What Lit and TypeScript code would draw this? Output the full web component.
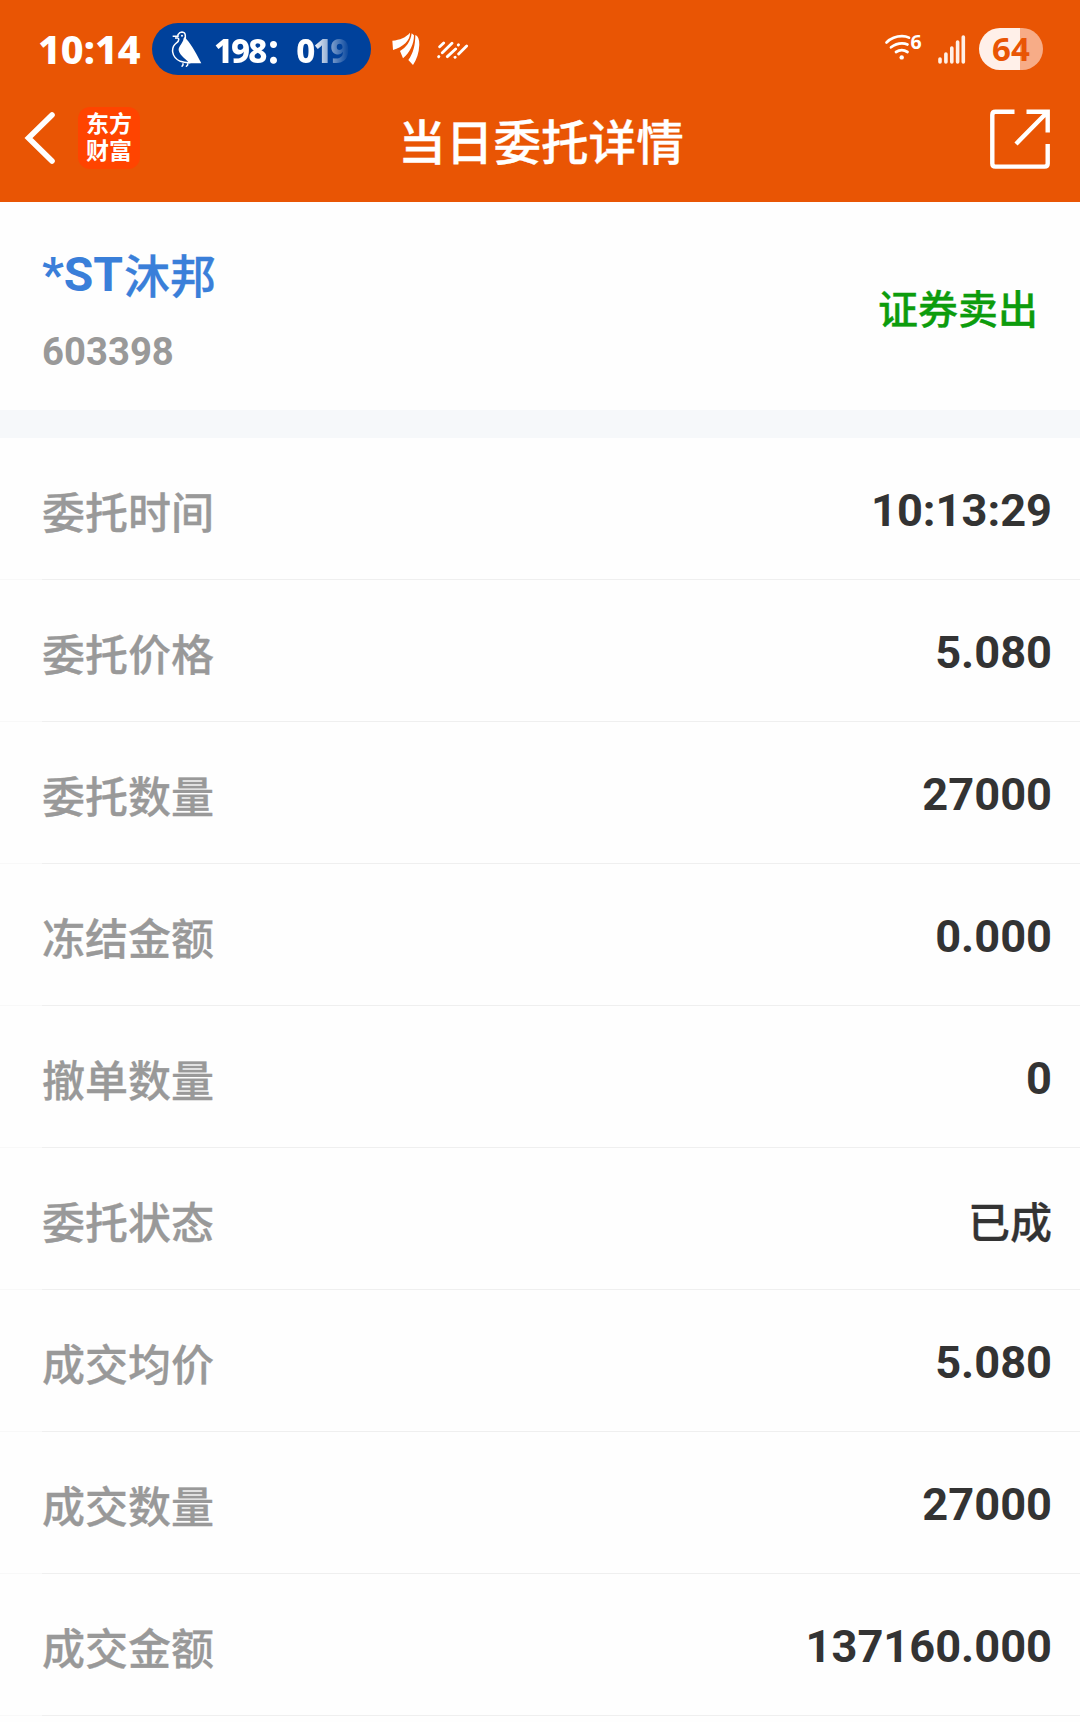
import { LitElement, html, css } from "lit";
import { customElement } from "lit/decorators.js";

const ROWS: [string, string][] = [
  ["委托时间", "10:13:29"],
  ["委托价格", "5.080"],
  ["委托数量", "27000"],
  ["冻结金额", "0.000"],
  ["撤单数量", "0"],
  ["委托状态", "已成"],
  ["成交均价", "5.080"],
  ["成交数量", "27000"],
  ["成交金额", "137160.000"],
];

@customElement("status-bar")
class StatusBar extends LitElement {
  static styles = css`
    :host { display: flex; align-items: center; height: 98px; padding: 0 37px 0 38px; box-sizing: border-box; color: #fff; font-family: "Noto Sans", "Noto Sans CJK SC", sans-serif; }
    .clock { width: 114px; font-size: 39.5px; font-weight: 800; line-height: 50px; white-space: nowrap; }
    .pill { display: flex; align-items: center; width: 219px; height: 52px; border-radius: 26px; background: #00419b; box-sizing: border-box; padding-left: 18.7px; }
    .bird { width: 31.3px; height: 36.7px; flex: none; }
    .ticker { margin-left: 12px; padding-top: 3px; width: 140px; white-space: nowrap; font-size: 33px; font-weight: 800; line-height: 46px; letter-spacing: -2px; -webkit-mask-image: linear-gradient(90deg, #000 70%, transparent 97%); mask-image: linear-gradient(90deg, #000 70%, transparent 97%); }
    .feather { width: 28px; height: 33.3px; margin-left: 20.7px; }
    .dashes { width: 31.3px; height: 18px; margin: 2px 0 0 17.6px; }
    .right { display: flex; align-items: center; margin-left: auto; }
    .wifi { width: 40px; height: 32px; overflow: visible; font: 700 19.5px "Noto Sans", sans-serif; }
    .signal { width: 30px; height: 32px; margin-left: 13px; }
    .battery { margin-left: 12px; width: 64px; height: 42px; border-radius: 21px; background: linear-gradient(90deg, #fff0e9 0 41px, #f7ac87 41px); color: #e95504; font-size: 33px; font-weight: 700; line-height: 41px; text-align: center; }
  `;
  render() {
    return html`
      <span class="clock">10:14</span>
      <div class="pill">
        <svg class="bird" viewBox="62 32 94 110">
          <path d="M103 50C118 66 134 90 153 129L117 129C112 121 88 106 85 90C84 78 98 70 100 54Z" fill="#fff"/>
          <g fill="none" stroke="#fff" stroke-width="4.500"><path d="M67 48H82M74 53H84M83 50V43Q88 35 95 35Q105 36 105 46V55M84 53Q88 62 78 68Q65 78 67 95Q70 114 90 123Q104 128 120 127M98 129V134L94 139M112 129V134L107 139"/></g>
          <circle cx="95" cy="46" r="3" fill="#fff"/>
        </svg>
        <span class="ticker">198：019</span>
      </div>
      <svg class="feather" viewBox="20 22 84 100" fill="#fff"><path d="M21 48C44 46 62 38 74 24C76 46 52 68 23 76Z"/><path d="M79 26L86 32C86 58 74 84 53 101L44 79C62 70 76 50 79 26Z"/><path d="M90 31Q102 34 102 60C101 85 94 105 83 121L69 106C84 86 90 60 90 31Z"/></svg>
      <svg class="dashes" viewBox="157 48 94 54"><path d="M165 65L177 54M162 95L162.500 94.500M173 83L202 55M188 95L213 72M221 60L221.500 59.500M211 97L211.500 96.500M222 87L246 63" fill="none" stroke="#fff" stroke-width="8.500" stroke-linecap="round"/></svg>
      <div class="right">
        <svg class="wifi" viewBox="884 33 40 32">
          <path d="M886.500 42.500Q893 36.200 902 36.200Q906 36.200 909 37.600M891 47.300Q896 43.300 902 43.300Q905 43.300 907.500 44.500M896 52Q901.800 48.300 907.500 52" fill="none" stroke="#fff" stroke-width="2.700" stroke-linecap="round"/>
          <circle cx="901.700" cy="57.400" r="2.200" fill="#fff"/>
          <text x="910.500" y="49" fill="#fff">6</text>
        </svg>
        <svg class="signal" viewBox="937 33 30 32"><path d="M940 59V62M945.900 54V62M951.800 48V62M957.600 42V62M963.300 37V62" fill="none" stroke="#fff0e6" stroke-width="3.600" stroke-linecap="round"/></svg>
        <span class="battery">64</span>
      </div>`;
  }
}

@customElement("nav-bar")
class NavBar extends LitElement {
  static styles = css`
    :host { display: grid; grid-template-columns: 1fr auto 1fr; align-items: center; height: 80px; padding: 0 30px 0 24px; box-sizing: border-box; color: #fff; font-family: Roboto, "Noto Sans CJK SC", sans-serif; }
    .left { display: flex; align-items: center; }
    .back { width: 32px; height: 54px; }
    .logo { margin-left: 22px; width: 62px; height: 62px; border-radius: 12px; background: #ff4400; display: flex; flex-direction: column; align-items: center; justify-content: center; font-size: 23px; font-weight: 700; line-height: 27px; }
    .title { padding: 12px 0 0 8px; font-size: 47.6px; font-weight: 500; line-height: 68px; -webkit-text-stroke: 0.3px currentColor; }
    .share { width: 60px; height: 60px; justify-self: end; margin-top: 1px; }
  `;
  render() {
    return html`
      <div class="left">
        <svg class="back" viewBox="0 0 32 54"><path d="M28 4L4.500 27L28 50" fill="none" stroke="#fff" stroke-width="5.600" stroke-linecap="round"/></svg>
        <div class="logo"><span>东方</span><span>财富</span></div>
      </div>
      <span class="title">当日委托详情</span>
      <svg class="share" viewBox="0 0 60 60"><g fill="none" stroke="#fff" stroke-width="4.400"><path d="M24.500 2.800H5.500Q2.300 2.800 2.300 6V54.500Q2.300 57.600 5.500 57.600H54.500Q57.700 57.600 57.700 54.500V35"/><path d="M36.500 2.800H57.700V23.500M56 4.500L26 35"/></g></svg>`;
  }
}

@customElement("app-root")
class AppRoot extends LitElement {
  static styles = css`
    :host { display: block; height: 1722px; overflow: hidden; background: #fefefe; font-family: Roboto, "Noto Sans CJK SC", sans-serif; }
    .header { height: 202px; background: #e95504; }
    .stock { display: flex; justify-content: space-between; height: 208px; padding: 0 42px; box-sizing: border-box; }
    .name { display: flex; margin-top: 38px; font-size: 48px; font-weight: 700; line-height: 70px; color: #3a7fd9; }
    .han { padding: 2px 0 0 1px; font-size: 46px; font-weight: 500; -webkit-text-stroke: 0.3px currentColor; }
    .code { margin-top: 16px; font-size: 38.3px; font-weight: 700; line-height: 48px; color: #999; }
    .side { margin-top: 80px; font-size: 40px; font-weight: 500; line-height: 58px; color: #0d9c0d; -webkit-text-stroke: 0.3px currentColor; }
    .gap { height: 28px; background: #f6f8fa; }
    .row { display: flex; align-items: center; justify-content: space-between; height: 142px; padding: 0 28px 0 42px; box-sizing: border-box; background: linear-gradient(90deg, #f8f8f8 42px, #efefef 42px) bottom / 100% 1px no-repeat; }
    .label { padding-top: 9px; font-size: 43px; font-weight: 500; line-height: 60px; color: #999; -webkit-text-stroke: 0.3px currentColor; }
    .value { padding-top: 4px; font-size: 45.2px; font-weight: 700; line-height: 60px; color: #333; }
    .cjk { padding-top: 10px; font-size: 42px; font-weight: 500; -webkit-text-stroke: 0.3px currentColor; }
  `;
  render() {
    return html`
      <div class="header"><status-bar></status-bar><nav-bar></nav-bar></div>
      <section class="stock">
        <div><div class="name"><span>*ST</span><span class="han">沐邦</span></div><div class="code">603398</div></div>
        <div class="side">证券卖出</div>
      </section>
      <div class="gap"></div>
      ${ROWS.map(([k, v]) => html`<div class="row"><span class="label">${k}</span><span class="value ${v === "已成" ? "cjk" : ""}">${v}</span></div>`)}`;
  }
}
